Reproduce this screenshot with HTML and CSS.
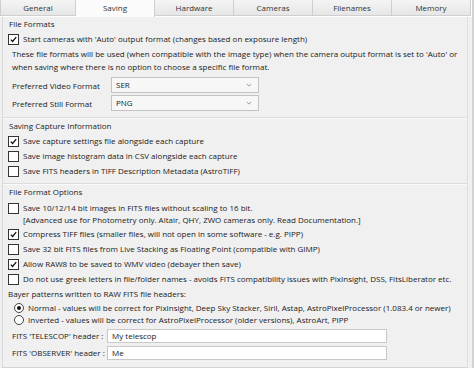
FILE: index.html
```html
<!DOCTYPE html>
<html lang="en">
<head>
    <meta charset="UTF-8">
    <title>Settings - Saving</title>
    <link rel="stylesheet" href="styles.css">
</head>
<body>
    <div class="window">
        <div class="tabs">
            <div class="tab first">General</div>
            <div class="tab active">Saving</div>
            <div class="tab">Hardware</div>
            <div class="tab">Cameras</div>
            <div class="tab">Filenames</div>
            <div class="tab">Memory</div>
        </div>
        <div class="panel">
            <div class="group">
                <div class="title">File Formats</div>
                <div class="check"><span class="box on"><svg viewBox="0 0 11 11"><path d="M2.2 5.6 L4.4 7.9 L8.8 2.6"/></svg></span>Start cameras with 'Auto' output format (changes based on exposure length)</div>
                <p class="note">These file formats will be used (when compatible with the image type) when the camera output format is set to 'Auto' or<br>when saving where there is no option to choose a specific file format.</p>
                <div class="field">
                    <span class="flabel">Preferred Video Format</span>
                    <div class="select">SER<svg viewBox="0 0 8 5"><path d="M1 1 L4 4 L7 1"/></svg></div>
                </div>
                <div class="field">
                    <span class="flabel">Preferred Still Format</span>
                    <div class="select">PNG<svg viewBox="0 0 8 5"><path d="M1 1 L4 4 L7 1"/></svg></div>
                </div>
            </div>

            <div class="group">
                <div class="title">Saving Capture Information</div>
                <div class="check"><span class="box on"><svg viewBox="0 0 11 11"><path d="M2.2 5.6 L4.4 7.9 L8.8 2.6"/></svg></span>Save capture settings file alongside each capture</div>
                <div class="check"><span class="box"></span>Save image histogram data in CSV alongside each capture</div>
                <div class="check"><span class="box"></span>Save FITS headers in TIFF Description Metadata (AstroTIFF)</div>
            </div>

            <div class="group last">
                <div class="title">File Format Options</div>
                <div class="check two"><span class="box"></span><span>Save 10/12/14 bit images in FITS files without scaling to 16 bit.<br>[Advanced use for Photometry only. Altair, QHY, ZWO cameras only. Read Documentation.]</span></div>
                <div class="check"><span class="box on"><svg viewBox="0 0 11 11"><path d="M2.2 5.6 L4.4 7.9 L8.8 2.6"/></svg></span>Compress TIFF files (smaller files, will not open in some software - e.g. PIPP)</div>
                <div class="check"><span class="box"></span>Save 32 bit FITS files from Live Stacking as Floating Point (compatible with GIMP)</div>
                <div class="check"><span class="box on"><svg viewBox="0 0 11 11"><path d="M2.2 5.6 L4.4 7.9 L8.8 2.6"/></svg></span>Allow RAW8 to be saved to WMV video (debayer then save)</div>
                <div class="check"><span class="box"></span>Do not use greek letters in file/folder names - avoids FITS compatibility issues with PixInsight, DSS, FitsLiberator etc.</div>
                <div class="subtitle">Bayer patterns written to RAW FITS file headers:</div>
                <div class="radio"><span class="dot on"></span>Normal - values will be correct for PixInsight, Deep Sky Stacker, Siril, Astap, AstroPixelProcessor (1.083.4 or newer)</div>
                <div class="radio"><span class="dot"></span>Inverted - values will be correct for AstroPixelProcessor (older versions), AstroArt, PIPP</div>
                <div class="field text">
                    <span class="flabel">FITS 'TELESCOP' header :</span>
                    <div class="input">My telescop</div>
                </div>
                <div class="field text">
                    <span class="flabel">FITS 'OBSERVER' header :</span>
                    <div class="input">Me</div>
                </div>
            </div>
        </div>
    </div>
</body>
</html>
```

FILE: styles.css
```css
* {
    margin: 0;
    padding: 0;
    box-sizing: border-box;
}
body {
    background: #ffffff;
    font-family: "Open Sans", "Noto Sans", sans-serif;
    font-size: 8px;
    color: #1a1a1a;
}
.window {
    width: 474px;
    height: 368px;
    background: #f0f0f0;
    border-right: 2px solid #d2d2d2;
    display: flex;
    flex-direction: column;
}
.tabs {
    display: flex;
    height: 17px;
    background: #ffffff;
}
.tab {
    width: 79px;
    height: 16px;
    line-height: 15px;
    text-align: center;
    background: linear-gradient(#f4f4f4, #e6e6e6);
    border: 1px solid #cfcfcf;
    border-left: none;
    border-top: none;
    color: #333333;
}
.tab.first {
    width: 76px;
    border-left: 1px solid #cfcfcf;
}
.tab.active {
    background: #fbfbfb;
    height: 17px;
    border-bottom: none;
}
.panel {
    flex: 1;
    margin: 0 4px 0 2px;
    border-left: 1px solid #d9d9d9;
    border-right: 1px solid #dedede;
    border-bottom: 1px solid #d4d4d4;
    background: #f0f0f0;
}
.group {
    padding: 0 0 5px 5px;
    border-bottom: 1px solid #dcdcdc;
    box-shadow: 0 1px 0 #fafafa;
}
.group + .group {
    padding-top: 1px;
}
.group.last {
    border-bottom: none;
    box-shadow: none;
}
.title {
    line-height: 14px;
    padding-left: 1px;
}
.check {
    display: flex;
    align-items: center;
    line-height: 14px;
    margin-top: 1px;
    white-space: nowrap;
}
.title + .check {
    margin-top: 1px;
}
.check.two {
    align-items: flex-start;
    line-height: 12px;
    margin-top: 3px;
}
.check.two .box {
    margin-top: 1px;
}
.box {
    width: 11px;
    height: 11px;
    margin: 0 4px 0 0;
    border: 1px solid #333333;
    background: #ffffff;
    flex: none;
    display: flex;
}
.box svg {
    width: 9px;
    height: 9px;
    margin: auto;
}
.box path {
    fill: none;
    stroke: #111111;
    stroke-width: 1.6;
}
.note {
    line-height: 13px;
    margin: 1px 0 0 4px;
    white-space: nowrap;
}
.field {
    display: flex;
    align-items: center;
    height: 18px;
    padding-left: 4px;
}
.note + .field {
    margin-top: 3px;
}
.flabel {
    width: 99px;
    flex: none;
}
.select {
    width: 148px;
    height: 16px;
    line-height: 14px;
    padding-left: 4px;
    border: 1px solid #c3c3c3;
    background: #f7f7f7;
    display: flex;
    align-items: center;
    justify-content: space-between;
}
.select svg {
    width: 6px;
    height: 4px;
    margin-right: 6px;
}
.select path {
    fill: none;
    stroke: #8a8a8a;
    stroke-width: 1.1;
}
.subtitle {
    line-height: 14px;
    margin-top: 1px;
}
.radio {
    display: flex;
    align-items: center;
    line-height: 12px;
    padding-left: 6px;
    white-space: nowrap;
}
.subtitle + .radio {
    margin-top: 1px;
}
.dot {
    width: 10px;
    height: 10px;
    margin-right: 4px;
    border: 1px solid #444444;
    border-radius: 50%;
    background: #ffffff;
    display: flex;
    flex: none;
}
.dot.on::after {
    content: "";
    width: 4px;
    height: 4px;
    margin: auto;
    border-radius: 50%;
    background: #111111;
}
.field.text {
    height: 15px;
    margin-top: 2px;
}
.radio + .field.text {
    margin-top: 2px;
}
.field.text .flabel {
    width: 95px;
}
.input {
    width: 280px;
    height: 14px;
    line-height: 12px;
    padding-left: 4px;
    border: 1px solid #c8c8c8;
    background: #ffffff;
}
```
